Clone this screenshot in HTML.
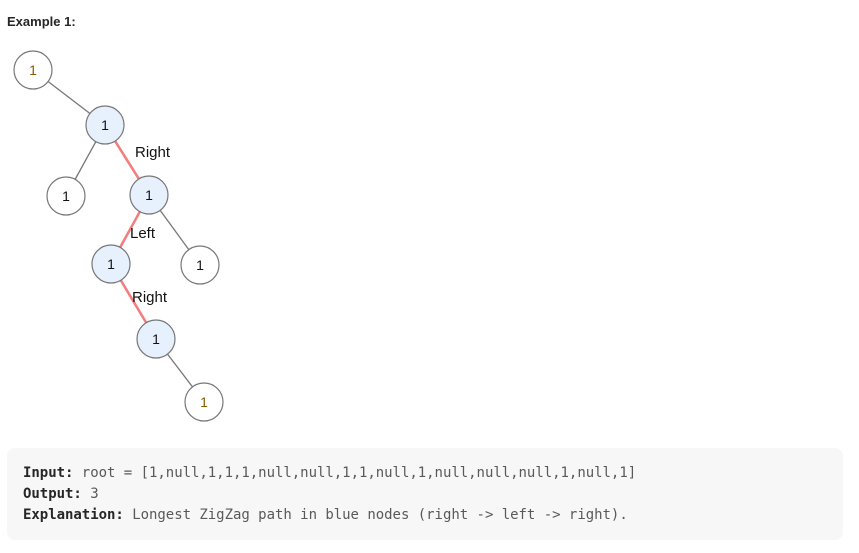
<!DOCTYPE html>
<html><head><meta charset="utf-8"><style>
body{margin:0;background:#fff;width:859px;height:553px;position:relative;font-family:"Liberation Sans",sans-serif;}
.h{position:absolute;left:7px;top:14px;font-weight:bold;font-size:13px;color:#262626;}
.box{position:absolute;left:7px;top:448px;width:836px;height:92px;background:#f7f7f8;border-radius:8px;}
pre{margin:0;position:absolute;left:16px;top:15px;font-family:"DejaVu Sans Mono","Liberation Mono",monospace;font-size:14px;line-height:21px;color:#595959;letter-spacing:-0.03px;}
b{color:#262626;}
svg{position:absolute;left:0;top:0;}
</style></head><body>
<div class="h">Example 1:</div>
<svg width="859" height="440" font-family="Liberation Sans, sans-serif">
<g stroke="#777" stroke-width="1.3">
<line x1="33" y1="70" x2="105" y2="125"/>
<line x1="105" y1="125" x2="66" y2="196"/>
<line x1="149" y1="195" x2="200" y2="265"/>
<line x1="156" y1="339" x2="204" y2="402"/>
</g>
<g stroke="#f47c7c" stroke-width="2.5">
<line x1="105" y1="125" x2="149" y2="195"/>
<line x1="149" y1="195" x2="111" y2="264"/>
<line x1="111" y1="264" x2="156" y2="339"/>
</g>
<g stroke="#777" stroke-width="1.2">
<circle cx="33" cy="70" r="19" fill="#fff"/>
<circle cx="105" cy="125" r="19" fill="#e6f1fd"/>
<circle cx="66" cy="196" r="19" fill="#fff"/>
<circle cx="149" cy="195" r="19" fill="#e6f1fd"/>
<circle cx="111" cy="264" r="19" fill="#e6f1fd"/>
<circle cx="200" cy="265" r="19" fill="#fff"/>
<circle cx="156" cy="339" r="19" fill="#e6f1fd"/>
<circle cx="204" cy="402" r="19" fill="#fff"/>
</g>
<g font-size="14" text-anchor="middle" fill="#111">
<text x="33" y="75" fill="#8a5a00">1</text>
<text x="105" y="130">1</text>
<text x="66" y="201">1</text>
<text x="149" y="200">1</text>
<text x="111" y="269">1</text>
<text x="200" y="270">1</text>
<text x="156" y="344">1</text>
<text x="204" y="407" fill="#8a5a00">1</text>
</g>
<g font-size="15" fill="#111">
<text x="135" y="157">Right</text>
<text x="130" y="238">Left</text>
<text x="132" y="302">Right</text>
</g>
</svg>
<div class="box"><pre><b>Input:</b> root = [1,null,1,1,1,null,null,1,1,null,1,null,null,null,1,null,1]
<b>Output:</b> 3
<b>Explanation:</b> Longest ZigZag path in blue nodes (right -&gt; left -&gt; right).</pre></div>
</body></html>
